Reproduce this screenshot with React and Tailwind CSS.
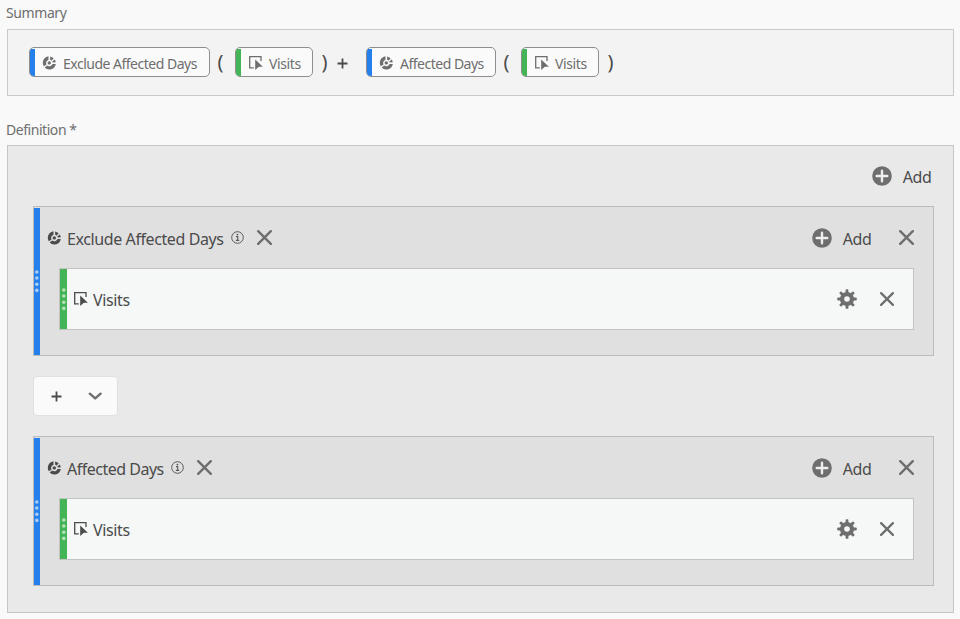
import React from "react";

function SegmentIcon({ className = "" }) {
  return (
    <svg className={className} width="14" height="14" viewBox="0 0 14 14" fill="currentColor">
      <path d="M6.5 0.3A6.6 6.6 0 0 0 1.8 10.3L4.6 8.5A3.5 3.5 0 0 1 6.5 3.8Z" />
      <path d="M8.1 0.4A6.6 6.6 0 0 1 11.7 2.3L9.5 4.7A3.5 3.5 0 0 0 8.1 3.8Z" />
      <path d="M12.7 3.4A6.6 6.6 0 0 1 13.8 6.2L10.7 6.5A3.5 3.5 0 0 0 10.3 5.4Z" />
      <path d="M13.8 7.9A6.6 6.6 0 0 1 2.6 11.5L5.2 9.6A3.5 3.5 0 0 0 10.6 8.1Z" />
      <circle cx="7.3" cy="6.9" r="1.7" />
    </svg>
  );
}

function MetricIcon({ className = "" }) {
  return (
    <svg className={className} width="14" height="14" viewBox="0 0 14 14">
      <path d="M4.8 11.9H0.7V0.7H12V5" fill="none" stroke="currentColor" strokeWidth="1.3" />
      <path d="M6.2 3.4L13.9 10.8H9.8L6.2 14Z" fill="currentColor" />
    </svg>
  );
}

function AddIcon() {
  return (
    <svg width="20" height="20" viewBox="0 0 20 20">
      <circle cx="10" cy="10" r="9.8" fill="#6e6e6e" />
      <path d="M10 4.7V15.3M4.7 10H15.3" stroke="#eeeeee" strokeWidth="2.4" strokeLinecap="round" />
    </svg>
  );
}

function CloseIcon({ size = 14, weight = 2.2 }) {
  return (
    <svg width={size} height={size} viewBox="0 0 14 14" className="shrink-0 text-[#6e6e6e]">
      <path d="M1.1 1.1L12.9 12.9M12.9 1.1L1.1 12.9" stroke="currentColor" strokeWidth={weight} strokeLinecap="round" />
    </svg>
  );
}

function GearIcon() {
  return (
    <svg width="20" height="20" viewBox="-10 -10 20 20" fill="#6e6e6e">
      {[0, 45, 90, 135].map((a) => (
        <rect key={a} x="-1.4" y="-9.8" width="2.8" height="19.6" rx="0.9" transform={`rotate(${a})`} />
      ))}
      <circle r="7.1" />
      <circle r="2.8" fill="#f5f8f7" />
    </svg>
  );
}

function InfoIcon() {
  return (
    <svg width="13" height="13" viewBox="0 0 13 13" className="shrink-0 text-[#5a5a5a]">
      <circle cx="6.5" cy="6.5" r="5.8" fill="none" stroke="currentColor" />
      <circle cx="6.4" cy="3.6" r="0.9" fill="currentColor" />
      <path d="M5 5.6H6.7V9.3M4.9 9.4H8.2" fill="none" stroke="currentColor" strokeWidth="1.1" />
    </svg>
  );
}

function PlusIcon({ className = "" }) {
  return (
    <svg className={className} width="11" height="11" viewBox="0 0 11 11">
      <path d="M5.5 0.5V10.5M0.5 5.5H10.5" stroke="#4b4b4b" strokeWidth="1.8" />
    </svg>
  );
}

function Paren({ close, className = "" }) {
  return (
    <span className={`w-[7px] text-center text-[20px] leading-[30px] text-[#4b4b4b] ${className}`}>
      {close ? ")" : "("}
    </span>
  );
}

function Chip({ kind, label, width, textWidth }) {
  const Icon = kind === "segment" ? SegmentIcon : MetricIcon;
  return (
    <div className={`flex h-[30px] items-center overflow-hidden rounded-[5px] border border-[#8e8e8e] bg-[#fafafa] text-[#6e6e6e] ${width}`}>
      <span className={`mt-px h-[27px] w-[5px] shrink-0 ${kind === "segment" ? "bg-[#2680eb]" : "bg-[#44b556]"}`} />
      <Icon className={`shrink-0 ${kind === "segment" ? "ml-[7px] mt-[2px]" : "ml-2 mt-[2px]"}`} />
      <span className={`mt-[3px] whitespace-nowrap text-sm leading-5 ${kind === "segment" ? "ml-[7px]" : "ml-[6px]"} ${textWidth}`}>{label}</span>
    </div>
  );
}

function Grip() {
  return (
    <svg width="4" height="23" viewBox="0 0 4 23" fill="#ffffff" fillOpacity="0.6">
      {[2, 8, 14.2, 20.4].map((y) => (
        <circle key={y} cx="1.8" cy={y} r="1.8" />
      ))}
    </svg>
  );
}

function AddButton() {
  return (
    <button className="flex items-center">
      <AddIcon />
      <span className="ml-[10px] mt-0.5 w-[30px] whitespace-nowrap text-base leading-6 tracking-[-0.4px] text-[#4b4b4b]">Add</span>
    </button>
  );
}

function MetricRow() {
  return (
    <div className="ml-[19px] mr-[19px] flex h-[62px] border border-[#c3c3c3] bg-[#f5f8f7]">
      <div className="flex w-[7px] items-center justify-center bg-[#44b556]">
        <Grip />
      </div>
      <div className="flex flex-1 items-center pr-[19px] text-[#4b4b4b]">
        <MetricIcon className="ml-[7px]" />
        <span className="ml-[5px] mt-px text-base leading-6 tracking-[-0.35px]">Visits</span>
        <div className="ml-auto flex items-center gap-[23px]">
          <GearIcon />
          <CloseIcon />
        </div>
      </div>
    </div>
  );
}

function SegmentBlock({ label, tracking }) {
  return (
    <section className="flex h-[150px] border border-[#bcbcbc] bg-[#e0e0e0]">
      <div className="mt-px flex w-[6px] items-center justify-center bg-[#2680eb]">
        <Grip />
      </div>
      <div className="flex-1">
        <header className="flex h-[61px] items-center pl-[7px] pr-[19px] text-[#4b4b4b]">
          <SegmentIcon className="shrink-0" />
          <span className={`ml-[6px] mt-[3px] whitespace-nowrap text-base leading-6 ${tracking}`}>{label}</span>
          <span className="ml-[7px]">
            <InfoIcon />
          </span>
          <span className="ml-[13px]">
            <CloseIcon size={15} />
          </span>
          <div className="ml-auto flex items-center gap-[27px]">
            <AddButton />
            <CloseIcon size={15} />
          </div>
        </header>
        <MetricRow />
      </div>
    </section>
  );
}

export default function App() {
  return (
    <main className="h-[619px] w-[960px] overflow-hidden bg-[#f9f9f9] pl-[7px] font-['Noto_Sans','Open_Sans',sans-serif] [font-stretch:87.5%]">
      <h2 className="-ml-px h-[29px] pt-[3px] text-sm leading-5 tracking-[-0.4px] text-[#6e6e6e]">Summary</h2>
      <div className="flex h-[67px] w-[947px] items-start border border-[#cacaca] bg-[#f3f3f3] pl-[21px] pt-[17px]">
        <Chip kind="segment" label="Exclude Affected Days" width="w-[181px]" textWidth="tracking-[-0.5px]" />
        <Paren className="ml-[7px]" />
        <span className="ml-[11px]">
          <Chip kind="metric" label="Visits" width="w-[78px]" textWidth="tracking-[-0.4px]" />
        </span>
        <Paren close className="ml-2" />
        <PlusIcon className="ml-[9px] mt-[11px]" />
        <span className="ml-[18px]">
          <Chip kind="segment" label="Affected Days" width="w-[130px]" textWidth="tracking-[-0.5px]" />
        </span>
        <Paren className="ml-[7px]" />
        <span className="ml-[11px]">
          <Chip kind="metric" label="Visits" width="w-[78px]" textWidth="tracking-[-0.4px]" />
        </span>
        <Paren close className="ml-2" />
      </div>
      <h2 className="-ml-px h-[49px] pt-6 text-sm leading-5 tracking-[-0.45px] text-[#6e6e6e]">Definition *</h2>
      <div className="h-[468px] w-[947px] border border-[#c6c6c6] bg-[#e9e9e9] pl-[25px] pr-[21px]">
        <div className="flex h-[60px] items-center justify-end">
          <AddButton />
        </div>
        <div className="w-[901px]">
          <SegmentBlock label="Exclude Affected Days" tracking="tracking-[-0.4px]" />
          <button className="my-5 flex h-10 w-[85px] items-center rounded border border-[#e0e0e0] bg-[#fafafa]">
            <PlusIcon className="ml-[17px]" />
            <svg className="ml-[26px]" width="14" height="8" viewBox="0 0 14 8">
              <path d="M1.8 1.7L7.2 6.4L12.6 1.7" fill="none" stroke="#6e6e6e" strokeWidth="2.4" strokeLinecap="round" strokeLinejoin="round" />
            </svg>
          </button>
          <SegmentBlock label="Affected Days" tracking="tracking-[-0.5px]" />
        </div>
      </div>
    </main>
  );
}
